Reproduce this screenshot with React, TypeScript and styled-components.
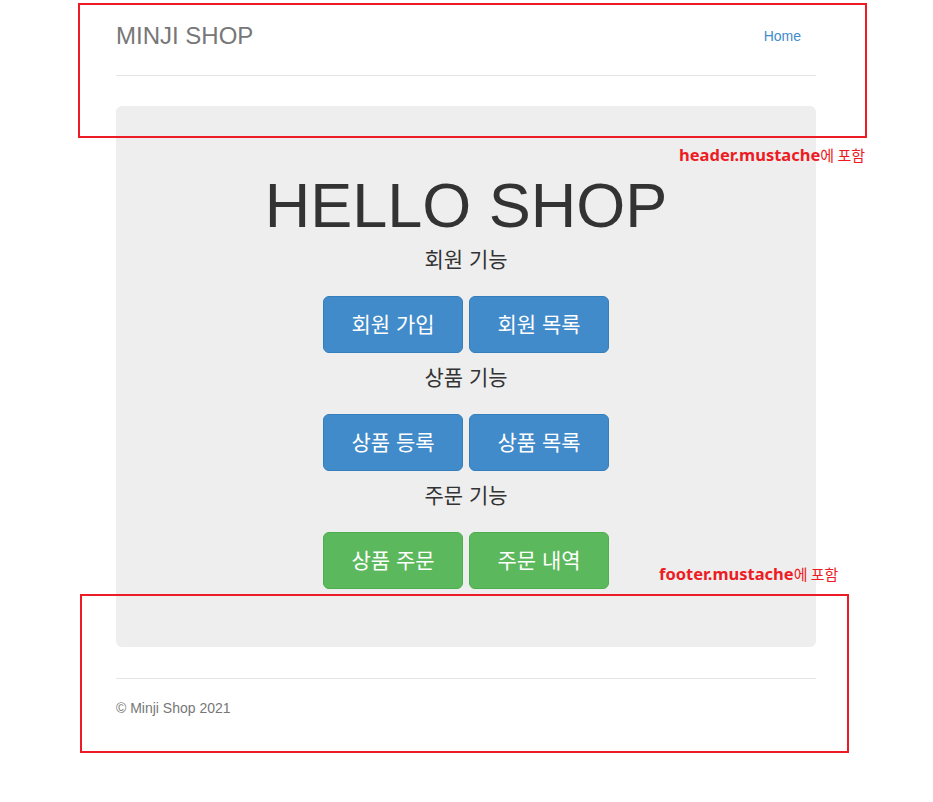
import styled, { createGlobalStyle } from "styled-components"

const GlobalStyle = createGlobalStyle`
  html, body {
    margin: 0;
    padding: 0;
    background: #ffffff;
  }
  body {
    font-family: "Liberation Sans", Arial, "Noto Sans CJK KR", sans-serif;
    font-size: 14px;
    line-height: 20px;
    color: #333333;
  }
`

const sections = [
  { title: "회원 기능", buttons: ["회원 가입", "회원 목록"], kind: "primary" },
  { title: "상품 기능", buttons: ["상품 등록", "상품 목록"], kind: "primary" },
  { title: "주문 기능", buttons: ["상품 주문", "주문 내역"], kind: "success" }
] as const

export default function App() {
  return (
    <Page>
      <GlobalStyle />
      <Container>
        <Header>
          <Brand>MINJI SHOP</Brand>
          <Nav>
            <NavLink href="#">Home</NavLink>
          </Nav>
        </Header>

        <Jumbotron>
          <Title>HELLO SHOP</Title>
          {sections.map((section) => (
            <Section key={section.title}>
              <Label>{section.title}</Label>
              <ButtonRow>
                {section.buttons.map((text) => (
                  <Button key={text} href="#" $kind={section.kind}>
                    {text}
                  </Button>
                ))}
              </ButtonRow>
            </Section>
          ))}
        </Jumbotron>

        <Footer>© Minji Shop 2021</Footer>
      </Container>

      {/* screenshot annotations */}
      <NoteBox $left={78} $top={3} $width={789} $height={135} />
      <Note $left={679} $top={143}>
        <NoteCode>header.mustache</NoteCode>
        <NoteKo>에 포함</NoteKo>
      </Note>
      <NoteBox $left={80} $top={594} $width={769} $height={159} />
      <Note $left={659} $top={562}>
        <NoteCode>footer.mustache</NoteCode>
        <NoteKo>에 포함</NoteKo>
      </Note>
    </Page>
  )
}

const Page = styled.div`
  position: relative;
  min-height: 802px;
  padding-right: 1px;
`

const Container = styled.div`
  width: 700px;
  margin: 0 auto;
  padding-top: 16px;
`

const Header = styled.div`
  display: flex;
  justify-content: space-between;
  align-items: flex-start;
  padding-bottom: 19px;
  border-bottom: 1px solid #e5e5e5;
`

const Brand = styled.h3`
  margin: 0;
  font-size: 24px;
  font-weight: 400;
  line-height: 40px;
  color: #777777;
`

const Nav = styled.nav`
  display: flex;
`

const NavLink = styled.a`
  display: block;
  padding: 10px 15px;
  font-size: 14px;
  line-height: 20px;
  color: #428bca;
  text-decoration: none;
`

const Jumbotron = styled.div`
  margin: 30px 0 31px;
  padding: 48px 0 58px;
  background: #eeeeee;
  border-radius: 6px;
  text-align: center;
`

const Title = styled.h1`
  margin: 16px 0 5px;
  font-size: 63px;
  font-weight: 400;
  line-height: 70px;
  color: #333333;
`

const Section = styled.div`
  display: flex;
  flex-direction: column;
  align-items: center;

  & + & {
    margin-top: 10px;
  }
`

const Label = styled.p`
  margin: 0 0 21px;
  font-size: 21px;
  font-weight: 400;
  line-height: 30px;
  color: #333333;
`

const ButtonRow = styled.div`
  display: flex;
  justify-content: center;
  gap: 6px;
`

const Button = styled.a<{ $kind: "primary" | "success" }>`
  display: inline-block;
  width: 140px;
  box-sizing: border-box;
  padding: 13px 0;
  font-size: 21px;
  line-height: 29px;
  color: #ffffff;
  text-decoration: none;
  border-radius: 6px;
  background: ${(p) => (p.$kind === "success" ? "#5cb85c" : "#428bca")};
  border: 1px solid ${(p) => (p.$kind === "success" ? "#4cae4c" : "#357ebd")};
`

const Footer = styled.footer`
  padding-top: 19px;
  border-top: 1px solid #e5e5e5;
  font-size: 14px;
  line-height: 20px;
  color: #777777;
`

const NoteBox = styled.div<{ $left: number; $top: number; $width: number; $height: number }>`
  position: absolute;
  left: ${(p) => p.$left}px;
  top: ${(p) => p.$top}px;
  width: ${(p) => p.$width}px;
  height: ${(p) => p.$height}px;
  box-sizing: border-box;
  border: 2px solid #ed1c24;
  pointer-events: none;
`

const Note = styled.div<{ $left: number; $top: number }>`
  position: absolute;
  left: ${(p) => p.$left}px;
  top: ${(p) => p.$top}px;
  display: flex;
  align-items: baseline;
  color: #ed1c24;
  white-space: nowrap;
`

const NoteCode = styled.span`
  font-family: "Noto Sans", "DejaVu Sans", sans-serif;
  font-size: 16.5px;
  font-weight: 700;
  line-height: 24px;
`

const NoteKo = styled.span`
  font-family: "Noto Sans CJK KR", sans-serif;
  font-size: 15px;
  line-height: 24px;
`
